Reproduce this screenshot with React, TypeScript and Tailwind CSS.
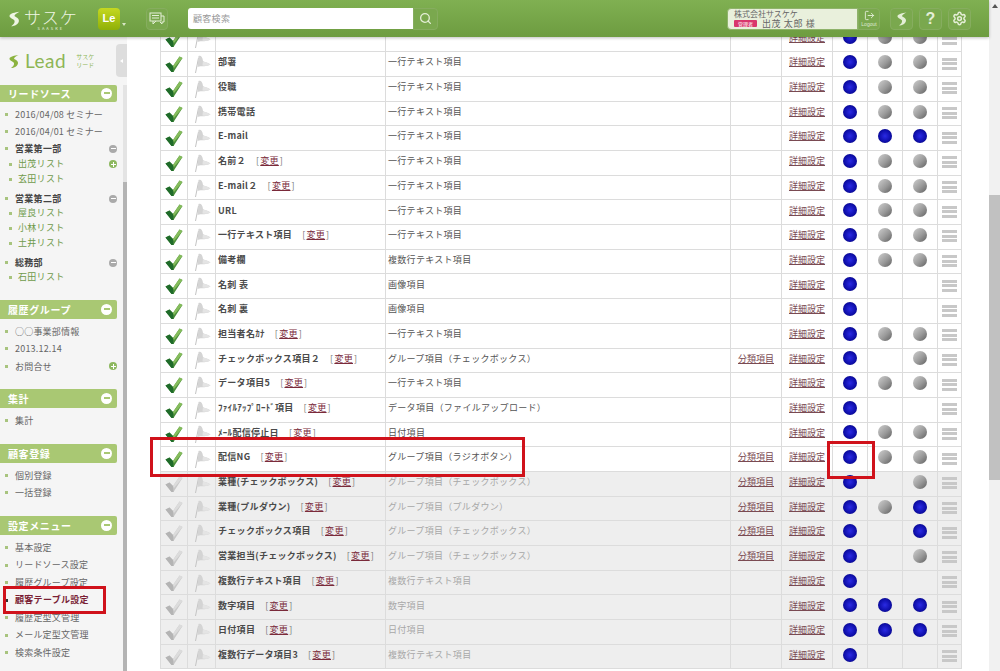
import { Search, Settings, LogOut } from 'lucide-react';

type Dot = 'b' | 'g' | '-';
type Row = {
  name: string;
  change?: boolean;
  type: string;
  bunrui?: boolean;
  dots: Dot[];
  off?: boolean;
};

const LINE = '一行テキスト項目';
const CHECK = 'グループ項目（チェックボックス）';

const rows: Row[] = [
  { name: '', type: '', dots: ['b', 'g', 'g'] },
  { name: '部署', type: LINE, dots: ['b', 'g', 'g'] },
  { name: '役職', type: LINE, dots: ['b', 'g', 'g'] },
  { name: '携帯電話', type: LINE, dots: ['b', 'g', 'g'] },
  { name: 'E-mail', type: LINE, dots: ['b', 'b', 'b'] },
  { name: '名前２', change: true, type: LINE, dots: ['b', 'g', 'g'] },
  { name: 'E-mail２', change: true, type: LINE, dots: ['b', 'g', 'g'] },
  { name: 'URL', type: LINE, dots: ['b', 'g', 'g'] },
  { name: '一行テキスト項目', change: true, type: LINE, dots: ['b', 'g', 'g'] },
  { name: '備考欄', type: '複数行テキスト項目', dots: ['b', 'g', 'g'] },
  { name: '名刺 表', type: '画像項目', dots: ['b', '-', '-'] },
  { name: '名刺 裏', type: '画像項目', dots: ['b', '-', '-'] },
  { name: '担当者名ｶﾅ', change: true, type: LINE, dots: ['b', 'g', 'g'] },
  { name: 'チェックボックス項目２', change: true, type: CHECK, bunrui: true, dots: ['b', '-', 'g'] },
  { name: 'データ項目5', change: true, type: LINE, dots: ['b', 'g', 'g'] },
  { name: 'ﾌｧｲﾙｱｯﾌﾟﾛｰﾄﾞ項目', change: true, type: 'データ項目（ファイルアップロード）', dots: ['b', '-', '-'] },
  { name: 'ﾒｰﾙ配信停止日', change: true, type: '日付項目', dots: ['b', 'g', 'g'] },
  { name: '配信NG', change: true, type: 'グループ項目（ラジオボタン）', bunrui: true, dots: ['b', 'g', 'g'] },
  { name: '業種(チェックボックス)', change: true, type: CHECK, bunrui: true, dots: ['b', '-', 'g'], off: true },
  { name: '業種(プルダウン)', change: true, type: 'グループ項目（プルダウン）', bunrui: true, dots: ['b', 'g', 'b'], off: true },
  { name: 'チェックボックス項目', change: true, type: CHECK, bunrui: true, dots: ['b', '-', 'b'], off: true },
  { name: '営業担当(チェックボックス)', change: true, type: CHECK, bunrui: true, dots: ['b', '-', 'g'], off: true },
  { name: '複数行テキスト項目', change: true, type: '複数行テキスト項目', dots: ['b', '-', '-'], off: true },
  { name: '数字項目', change: true, type: '数字項目', dots: ['b', 'b', 'b'], off: true },
  { name: '日付項目', change: true, type: '日付項目', dots: ['b', 'b', 'b'], off: true },
  { name: '複数行データ項目3', change: true, type: '複数行テキスト項目', dots: ['b', '-', '-'], off: true },
];

type MenuItem = { label: string; kind?: 'head' | 'sub' | 'current'; plus?: boolean; minus?: boolean; h?: string };
type Section = { title: string; gap: string; h: string; listGap: string; items: MenuItem[] };

const sections: Section[] = [
  {
    title: 'リードソース',
    gap: 'mt-0',
    h: 'h-[16.5px]',
    listGap: 'mt-[4px]',
    items: [
      { label: '2016/04/08 セミナー' },
      { label: '2016/04/01 セミナー' },
      { label: '営業第一部', kind: 'head', minus: true, h: 'h-[16px]' },
      { label: '出茂リスト', kind: 'sub', plus: true, h: 'h-[15px]' },
      { label: '玄田リスト', kind: 'sub', h: 'h-[15px]' },
      { label: '営業第二部', kind: 'head', minus: true, h: 'h-[19px] pt-[5px]' },
      { label: '屋良リスト', kind: 'sub', h: 'h-[15px]' },
      { label: '小林リスト', kind: 'sub', h: 'h-[15px]' },
      { label: '土井リスト', kind: 'sub', h: 'h-[15px]' },
      { label: '総務部', kind: 'head', minus: true, h: 'h-[19px] pt-[5px]' },
      { label: '石田リスト', kind: 'sub', h: 'h-[15px]' },
    ],
  },
  {
    title: '履歴グループ',
    gap: 'mt-[15px]',
    h: 'h-[19px]',
    listGap: 'mt-[4px]',
    items: [{ label: '○○事業部情報' }, { label: '2013.12.14' }, { label: 'お問合せ', plus: true }],
  },
  { title: '集計', gap: 'mt-[13.5px]', h: 'h-[19px]', listGap: 'mt-[4px]', items: [{ label: '集計' }] },
  {
    title: '顧客登録',
    gap: 'mt-[14.6px]',
    h: 'h-[19px]',
    listGap: 'mt-[4px]',
    items: [{ label: '個別登録' }, { label: '一括登録' }],
  },
  {
    title: '設定メニュー',
    gap: 'mt-[14.2px]',
    h: 'h-[19px]',
    listGap: 'mt-[4px]',
    items: [
      { label: '基本設定' },
      { label: 'リードソース設定' },
      { label: '履歴グループ設定' },
      { label: '顧客テーブル設定', kind: 'current' },
      { label: '履歴定型文管理' },
      { label: 'メール定型文管理' },
      { label: '検索条件設定' },
    ],
  },
];

const SLogo = ({ className }: { className: string }) => (
  <svg viewBox="0 0 20 28" className={className}>
    <path
      d="M19 1 C11 2 2 4 1 8 C0 12 9 14 10 17 C11 21 7 25 4 27 C10 27 18 23 18 17 C18 11 10 10 10 8 C10 6 15 3 19 1 Z"
      fill="currentColor"
    />
  </svg>
);

const CheckMark = ({ off }: { off?: boolean }) => (
  <svg viewBox="0 0 18 18" className="w-[18px] h-[18px]">
    <path d="M0.5 9.5 L4.5 7.5 L8 11 L14.5 1.5 L17.5 3 L8.5 17 L6.5 17 Z" fill={off ? '#c8c8c8' : '#4c8f3c'} />
    <path d="M0.5 9.5 L4.5 7.5 L8 11 L8.5 17 L6.5 17 Z" fill={off ? '#b4b4b4' : '#1f6b2a'} />
    <path d="M8 11 L14.5 1.5 L17.5 3 L9 13 Z" fill={off ? '#dcdcdc' : '#86bd5c'} />
  </svg>
);

const FlagIcon = () => (
  <svg viewBox="0 0 18 22" className="w-[18px] h-[22px]">
    <path d="M2.5 20 L5.5 5" stroke="#c4c4c4" strokeWidth="1" fill="none" />
    <path d="M5.5 3 C8 2 9.5 4 10 8 C12 9.5 15 9.5 17.5 11.5 C13.5 14 9 12.5 4.5 14 Z" fill="#d4d4d4" />
    <path d="M10 8 C12 9.5 15 9.5 17.5 11.5 C15 13 12 13 9.5 12.5 Z" fill="#e4e4e4" />
  </svg>
);

const Ball = ({ kind }: { kind: Dot }) => {
  if (kind === '-') return null;
  return (
    <span
      className={
        kind === 'b'
          ? 'block mx-auto w-[14px] h-[14px] rounded-full bg-[radial-gradient(circle_at_50%_50%,#2a2ae4,#0d0da8_60%,#04044f)]'
          : 'block mx-auto w-[14px] h-[14px] rounded-full bg-[linear-gradient(135deg,#cfcfcf,#9a9a9a_55%,#5f5f5f)]'
      }
    />
  );
};

const DragBars = () => (
  <span className="flex flex-col gap-[1.5px] w-[15px] mx-auto">
    <span className="h-[3px] bg-[#c8c8c8]" />
    <span className="h-[3px] bg-[#c8c8c8]" />
    <span className="h-[3px] bg-[#c8c8c8]" />
  </span>
);

const SmallRound = ({ type }: { type: 'plus' | 'minus' }) => (
  <span
    className={
      type === 'plus'
        ? 'relative w-[8px] h-[8px] rounded-full bg-[#8db85f] flex items-center justify-center shrink-0'
        : 'w-[8px] h-[8px] rounded-full bg-[#aaaaaa] flex items-center justify-center shrink-0'
    }
  >
    <span className="w-[5px] h-[1px] bg-white" />
    {type === 'plus' && <span className="absolute left-[3.5px] top-[1.5px] w-[1px] h-[5px] bg-white" />}
  </span>
);

const HeaderButton = ({ children, className }: { children: React.ReactNode; className: string }) => (
  <div
    className={`h-[22px] rounded-[4px] border border-[#86ad5f] bg-[#7aa84e] flex items-center justify-center ${className}`}
  >
    {children}
  </div>
);

const Header = () => (
  <header className="h-[37px] shrink-0 flex items-center bg-[linear-gradient(#80b052,#6d9c40)] shadow-[0_1px_3px_rgba(0,0,0,0.25)] relative z-10">
    <div className="w-[98px] pl-[9px] flex items-center text-[#eef5e4] shrink-0">
      <SLogo className="w-[11px] h-[20px]" />
      <div className="flex flex-col items-center ml-[4px]">
        <span className="text-[17px] leading-[19px] tracking-[1px] font-light">サスケ</span>
        <span className="text-[4px] leading-[4px] tracking-[2px]">SAASKE</span>
      </div>
    </div>
    <div className="w-[22px] h-[22px] rounded-[4px] bg-[linear-gradient(#c5d820,#8fb008)] flex items-center justify-center text-white text-[11px] font-bold font-['Liberation_Sans',sans-serif]">
      Le
    </div>
    <span className="ml-[2px] mt-[11px] w-0 h-0 border-x-[2px] border-x-transparent border-t-[3px] border-t-[#d8e6c4]" />
    <HeaderButton className="w-[22px] ml-[20px]">
      <svg viewBox="0 0 16 14" className="w-[16px] h-[14px]" fill="none" stroke="#e4eed6" strokeWidth="1">
        <rect x="1" y="1" width="11" height="8" />
        <path d="M3 3.5 H10 M3 6 H10 M4 9 V12 L7 9 M12 4 H15 V10 H13 V12 L11 10" />
      </svg>
    </HeaderButton>
    <div className="ml-[20px] flex items-center">
      <div className="w-[225px] h-[21px] bg-white rounded-l-[3px] flex items-center pl-[5px] text-[9px] text-[#999999] tracking-[0.3px]">
        顧客検索
      </div>
      <div className="w-[25px] h-[22px] rounded-r-[4px] border border-[#86ad5f] bg-[#7aa84e] flex items-center justify-center">
        <Search className="w-[13px] h-[13px] text-[#e4eed6]" strokeWidth={2.4} />
      </div>
    </div>
    <div className="ml-auto flex items-center mr-[18px]">
      <div className="w-[131px] h-[22px] rounded-l-[4px] bg-[#e9f0dc] border border-[#8fb36b] pl-[6px] flex flex-col justify-center">
        <span className="text-[8px] leading-[9px] text-[#666666]">株式会社サスケケ</span>
        <span className="flex items-center text-[9px] leading-[11px] text-[#666666] tracking-[0.6px]">
          <span className="w-[23px] h-[7px] bg-[#d9366c] rounded-[1px] text-white text-[5px] leading-[7px] text-center mr-[5px] tracking-normal">
            管理者
          </span>
          出茂 太郎 様
        </span>
      </div>
      <div className="w-[22px] h-[22px] rounded-r-[4px] border border-[#86ad5f] bg-[#7aa84e] flex flex-col items-center justify-center">
        <LogOut className="w-[11px] h-[11px] text-[#e4eed6]" strokeWidth={2} />
        <span className="text-[5px] leading-[6px] text-[#dfe9d0] font-['Liberation_Sans',sans-serif]">Logout</span>
      </div>
      <HeaderButton className="w-[23px] ml-[10px] text-[#e4eed6]">
        <SLogo className="w-[10px] h-[18px]" />
      </HeaderButton>
      <HeaderButton className="w-[23px] ml-[6px] text-[#e4eed6] text-[16px] font-bold font-['Liberation_Sans',sans-serif]">
        ?
      </HeaderButton>
      <HeaderButton className="w-[23px] ml-[6px]">
        <Settings className="w-[15px] h-[15px] text-[#e4eed6]" strokeWidth={2.4} />
      </HeaderButton>
    </div>
  </header>
);

const MenuEntry = ({ item }: { item: MenuItem }) => {
  const isSub = item.kind === 'sub';
  const isHead = item.kind === 'head';
  const isCurrent = item.kind === 'current';
  return (
    <li
      className={`flex items-center pr-[6px] ${item.h ?? 'h-[17.5px]'} ${isSub ? 'pl-[9px]' : 'pl-[5px]'}`}
    >
      <span
        className={
          isCurrent
            ? 'w-[3px] h-[3px] bg-[#333333] shrink-0'
            : 'w-[3px] h-[3px] bg-[#a8c47e] shrink-0'
        }
      />
      <span
        className={
          isHead
            ? 'ml-[7px] flex-1 text-[9px] font-bold text-[#444444] tracking-[0.3px] whitespace-nowrap'
            : isSub
              ? 'ml-[6px] flex-1 text-[9px] text-[#6f9a4a] tracking-[0.3px] whitespace-nowrap'
              : isCurrent
                ? 'ml-[7px] flex-1 text-[9px] font-bold text-[#7a1f35] tracking-[0.3px] whitespace-nowrap'
                : 'ml-[7px] flex-1 text-[9px] text-[#666666] tracking-[0.2px] whitespace-nowrap'
        }
      >
        {item.label}
      </span>
      {item.plus && <SmallRound type="plus" />}
      {item.minus && <SmallRound type="minus" />}
    </li>
  );
};

const Sidebar = () => (
  <aside className="w-[127px] shrink-0 flex bg-[#f5f5f5] relative overflow-hidden">
    <div className="w-[123px] shrink-0">
      <div className="h-[48px] flex items-center pl-[9px] text-[#8cb33f]">
        <SLogo className="w-[10px] h-[19px]" />
        <span className="ml-[6px] text-[19px] font-normal tracking-[0.5px] font-['Lato',sans-serif] text-[#8db555]">
          Lead
        </span>
        <span className="ml-[10px] text-[6px] leading-[8px] text-[#8db555] text-center">
          サスケ
          <br />
          リード
        </span>
      </div>
      {sections.map((section) => (
        <section key={section.title} className={section.gap}>
          <div
            className={`w-[117px] ${section.h} rounded-r-[2px] bg-[#a9c873] flex items-center justify-between pl-[8px] pr-[5px]`}
          >
            <span className="text-[10px] font-bold text-white tracking-[0.6px]">{section.title}</span>
            <span className="w-[11px] h-[11px] rounded-full bg-white flex items-center justify-center">
              <span className="w-[6px] h-[2px] bg-[#a9c873]" />
            </span>
          </div>
          <ul className={section.listGap}>
            {section.items.map((item) => (
              <MenuEntry key={item.label} item={item} />
            ))}
          </ul>
        </section>
      ))}
    </div>
    <div className="w-[4px] flex flex-col pt-[48px]">
      <div className="h-[97px] bg-[#e4e4e4]" />
      <div className="flex-1 bg-[#b4b4b4]" />
    </div>
    {/* tab for closing the side menu */}
    <div className="absolute right-0 top-[7px] w-[11px] h-[33px] rounded-l-[4px] bg-[#dddddd] flex items-center justify-center">
      <span className="w-0 h-0 border-y-[2px] border-y-transparent border-r-[3px] border-r-white" />
    </div>
  </aside>
);

const FieldTable = () => (
  <table className="w-[801px] ml-[33px] -mt-[10.4px] border-collapse table-fixed text-[9px] tracking-[0.3px] text-[#555555]">
    <colgroup>
      <col className="w-[27px]" />
      <col className="w-[28px]" />
      <col className="w-[170px]" />
      <col className="w-[345px]" />
      <col className="w-[51px]" />
      <col className="w-[51px]" />
      <col className="w-[35px]" />
      <col className="w-[35px]" />
      <col className="w-[35px]" />
      <col className="w-[24px]" />
    </colgroup>
    <tbody>
      {rows.map((row, i) => (
        <tr key={i} className={row.off ? 'h-[24.7px] bg-[#eeeeee]' : 'h-[24.7px] bg-white'}>
          <td className="border border-[#dcdcdc] p-0">
            <span className="flex justify-center">
              <CheckMark off={row.off} />
            </span>
          </td>
          <td className="border border-[#dcdcdc] p-0">
            <span className="flex justify-center">
              <FlagIcon />
            </span>
          </td>
          <td className="border border-[#dcdcdc] p-0 pl-[2px] pb-[4px] whitespace-nowrap font-bold text-[#4a4a4a]">
            {row.name}
            {row.change && (
              <span className="ml-[10px] font-normal text-[#777777]">
                [<span className="mx-[1px] text-[#7a2a3a] underline">変更</span>]
              </span>
            )}
          </td>
          <td
            className={
              row.off
                ? 'border border-[#dcdcdc] p-0 pl-[2px] pb-[4px] whitespace-nowrap text-[#a8a8a8]'
                : 'border border-[#dcdcdc] p-0 pl-[2px] pb-[4px] whitespace-nowrap'
            }
          >
            {row.type}
          </td>
          <td className="border border-[#dcdcdc] p-0 pb-[4px] text-center">
            {row.bunrui && <span className="text-[#7a4a52] underline tracking-normal">分類項目</span>}
          </td>
          <td className="border border-[#dcdcdc] p-0 pb-[4px] text-center">
            <span className="text-[#7a4a52] underline tracking-normal">詳細設定</span>
          </td>
          {row.dots.map((dot, j) => (
            <td key={j} className="border border-[#dcdcdc] p-0 pb-[4px]">
              <Ball kind={dot} />
            </td>
          ))}
          <td className="border border-[#dcdcdc] p-0 pb-[1px]">
            <DragBars />
          </td>
        </tr>
      ))}
    </tbody>
  </table>
);

const PageScrollbar = () => (
  <div className="w-[11px] shrink-0 bg-[#f1f1f1] flex flex-col items-center">
    <span className="mt-[4px] w-0 h-0 border-x-[3px] border-x-transparent border-b-[4px] border-b-[#555555]" />
    <div className="mt-[187px] w-full h-[285px] bg-[#c1c1c1]" />
  </div>
);

export default function App() {
  return (
    <div className="h-[671px] w-[1000px] flex overflow-hidden bg-white font-['Noto_Sans_CJK_JP','Noto_Sans',sans-serif] relative">
      <div className="flex-1 min-w-0 flex flex-col">
        <Header />
        <div className="flex-1 min-h-0 flex">
          <Sidebar />
          <main className="flex-1 min-w-0 overflow-hidden">
            <FieldTable />
          </main>
        </div>
      </div>
      <PageScrollbar />
      {/* red annotation boxes drawn over the screenshot */}
      <div className="absolute left-[150px] top-[437px] w-[375px] h-[40px] border-[3px] border-[#d0121b]" />
      <div className="absolute left-[827px] top-[441px] w-[48px] h-[38px] border-[3px] border-[#d0121b]" />
      <div className="absolute left-[3px] top-[586px] w-[103px] h-[28px] border-[3px] border-[#d0121b]" />
    </div>
  );
}
